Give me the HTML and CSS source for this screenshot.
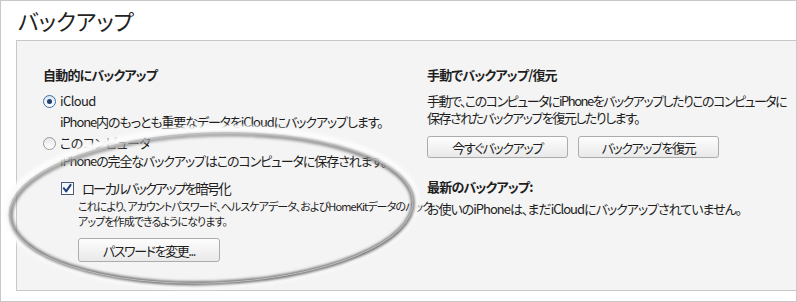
FILE: index.html
```html
<!DOCTYPE html>
<html>
<head>
    <title>バックアップ</title>
    <link rel="stylesheet" href="styles.css">
</head>
<body>
    <div class="frame">
        <h1 class="title">バックアップ</h1>
        <div class="panel">
            <div class="col">
                <h2 class="head">自動的にバックアップ</h2>
                <label class="radio on"><span class="dot"></span>iCloud</label>
                <p class="desc">iPhone内のもっとも重要なデータをiCloudにバックアップします。</p>
                <label class="radio"><span class="dot"></span>このコンピュータ</label>
                <p class="desc">iPhoneの完全なバックアップはこのコンピュータに保存されます。</p>
                <label class="check">
                    <span class="box">
                        <svg width="13" height="13" viewBox="0 0 13 13"><path d="M3 6.2 L5.6 9.6 L10.4 2.6" fill="none" stroke="#22427a" stroke-width="2.2" stroke-linecap="round" stroke-linejoin="round"/></svg>
                    </span>ローカルバックアップを暗号化
                </label>
                <p class="note">これにより、アカウントパスワード、ヘルスケアデータ、およびHomeKitデータのバック<br>アップを作成できるようになります。</p>
                <button class="btn btn-pass">パスワードを変更...</button>
            </div>
            <div class="col">
                <h2 class="head">手動でバックアップ/復元</h2>
                <p class="manual">手動で、このコンピュータにiPhoneをバックアップしたりこのコンピュータに<br>保存されたバックアップを復元したりします。</p>
                <div class="actions">
                    <button class="btn">今すぐバックアップ</button>
                    <button class="btn">バックアップを復元</button>
                </div>
                <h2 class="head latest">最新のバックアップ:</h2>
                <p class="status">お使いのiPhoneは、まだiCloudにバックアップされていません。</p>
            </div>
        </div>
        <!-- highlight ring drawn over the encryption option -->
        <svg class="ring" width="797" height="302" viewBox="0 0 797 302">
            <defs>
                <filter id="soft" x="-10%" y="-20%" width="120%" height="140%">
                    <feGaussianBlur stdDeviation="1.5"/>
                </filter>
                <linearGradient id="shade" x1="0" y1="0" x2="0.3" y2="1">
                    <stop offset="0" stop-color="#9a9a9a"/>
                    <stop offset="1" stop-color="#4e4e4e"/>
                </linearGradient>
            </defs>
            <g transform="rotate(-2 211 208)">
                <ellipse cx="211" cy="207" rx="205" ry="78" fill="none" stroke="#fcfcfc" stroke-width="7" filter="url(#soft)"/>
                <ellipse cx="212" cy="209" rx="201" ry="74" fill="none" stroke="url(#shade)" stroke-width="3.2" filter="url(#soft)"/>
                <ellipse cx="211" cy="208" rx="202" ry="75" fill="none" stroke="#bdbdbd" stroke-width="1"/>
            </g>
        </svg>
    </div>
</body>
</html>
```

FILE: styles.css
```css
body {
    margin: 0;
    font-family: "Noto Sans CJK JP", "Noto Sans", sans-serif;
    font-feature-settings: "palt";
    color: #1e1e1e;
    background: #fff;
}
.frame {
    position: relative;
    width: 797px;
    height: 302px;
    box-sizing: border-box;
    border: 1px solid #c8c8c8;
    background: #fff;
}
.title {
    margin: 0;
    height: 39px;
    line-height: 38px;
    padding-left: 17px;
    font-size: 22px;
    font-weight: normal;
    color: #222;
}
.panel {
    margin-left: 15px;
    height: 251px;
    box-sizing: border-box;
    border: 1px solid #c8c8c8;
    border-right: none;
    background: #f4f4f4;
    padding: 25px 0 0 26px;
    display: grid;
    grid-template-columns: 384px 1fr;
}
.col {
    display: flex;
    flex-direction: column;
    align-items: flex-start;
}
.head {
    margin: 0;
    font-size: 13px;
    line-height: 18px;
    font-weight: bold;
    letter-spacing: -0.8px;
}
.radio {
    display: flex;
    align-items: center;
    gap: 4px;
    margin-top: 8px;
    font-size: 13px;
    line-height: 18px;
    letter-spacing: -0.6px;
}
.radio + .desc + .radio {
    margin-top: 3px;
}
.dot {
    width: 11px;
    height: 11px;
    border-radius: 50%;
    border: 1px solid #9a9a9a;
    background: linear-gradient(#e6e6e6, #fff);
    position: relative;
}
.on .dot {
    border-color: #3d6ea3;
    background: linear-gradient(#d8e6f3, #fff);
}
.on .dot::after {
    content: "";
    position: absolute;
    left: 3px;
    top: 3px;
    width: 5px;
    height: 5px;
    border-radius: 50%;
    background: #243f6b;
}
.desc {
    margin: 3px 0 0 17px;
    font-size: 13px;
    line-height: 18px;
    letter-spacing: -1.1px;
}
.radio + .desc + .radio + .desc {
    margin-top: 0;
}
.check {
    display: flex;
    align-items: center;
    gap: 8px;
    margin: 9px 0 0 18px;
    font-size: 13.5px;
    line-height: 18px;
    letter-spacing: -2px;
}
.box {
    width: 11px;
    height: 11px;
    border: 1px solid #4a5a70;
    background: linear-gradient(#eef4fb, #fff);
    display: flex;
    letter-spacing: 0;
}
.box svg {
    margin: -1px 0 0 -1px;
}
.note {
    margin: 2px 0 0 35px;
    font-size: 11px;
    line-height: 15px;
    letter-spacing: -0.9px;
    white-space: nowrap;
}
.btn {
    height: 23px;
    padding: 0;
    border: 1px solid #acacac;
    border-radius: 3px;
    background: linear-gradient(#fdfdfd, #e9e9e9);
    font-family: inherit;
    font-feature-settings: "palt";
    font-size: 13px;
    letter-spacing: -1.4px;
    color: #1e1e1e;
    box-sizing: border-box;
}
.btn-pass {
    margin: 9px 0 0 35px;
    width: 142px;
    height: 24px;
}
.manual {
    margin: 8px 0 0;
    font-size: 13px;
    line-height: 17px;
    letter-spacing: -1.5px;
    white-space: nowrap;
}
.actions {
    display: flex;
    gap: 10px;
    margin-top: 10px;
}
.actions .btn {
    width: 141px;
    height: 22px;
}
.latest {
    margin-top: 20px;
}
.status {
    margin: 4px 0 0;
    font-size: 13px;
    line-height: 18px;
    letter-spacing: -1px;
}
.ring {
    position: absolute;
    left: -1px;
    top: -1px;
    pointer-events: none;
}
```
